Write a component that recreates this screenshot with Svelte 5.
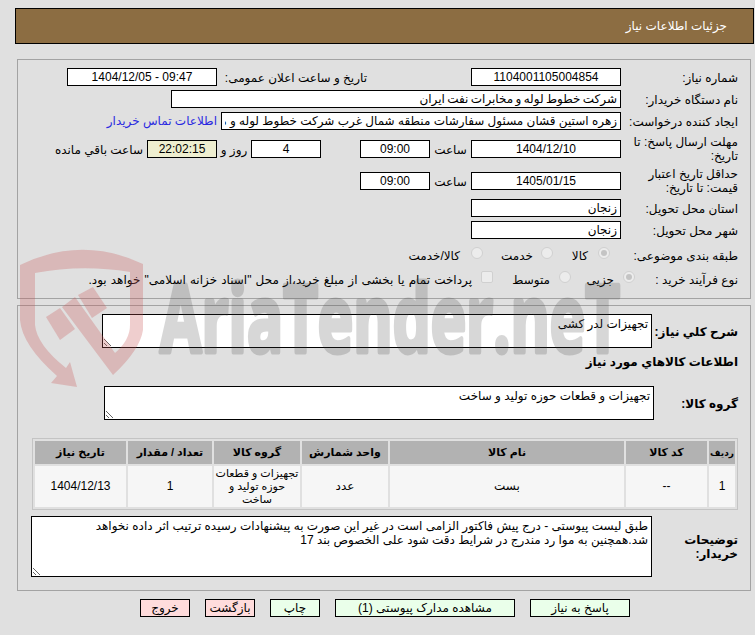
<script>
  const cols = ['ردیف', 'کد کالا', 'نام کالا', 'واحد شمارش', 'گروه کالا', 'تعداد / مقدار', 'تاریخ نیاز'];
  const cells = ['1', '--', 'بست', 'عدد', 'تجهیزات و قطعات\nحوزه تولید و\nساخت', '1', '1404/12/13'];
  const widths = [26, 81, 234, 86, 86, 84, 91];
  const summary = 'تجهیزات لدر کشی';
  const group = 'تجهیزات و قطعات حوزه تولید و ساخت';
  const note = 'طبق لیست پیوستی - درج پیش فاکتور الزامی است در غیر این صورت به پیشنهادات رسیده ترتیب اثر داده نخواهد شد.همچنین به موا رد مندرج در شرایط دقت شود علی الخصوص بند 17';
</script>

<div class="page" dir="rtl">
  <header class="title"><span>جزئیات اطلاعات نیاز</span></header>

  <section class="panel first">
    <div class="row">
      <span class="label">شماره نیاز:</span>
      <input class="w150 center" readonly value="1104001105004854" />
      <span class="label pub">تاریخ و ساعت اعلان عمومی:</span>
      <input class="w150 center" dir="ltr" readonly value="1404/12/05 - 09:47" />
    </div>
    <div class="row">
      <span class="label">نام دستگاه خریدار:</span>
      <input class="w450 tight" readonly value="شرکت خطوط لوله و مخابرات نفت ایران" />
    </div>
    <div class="row">
      <span class="label">ایجاد کننده درخواست:</span>
      <input class="w400" readonly value="زهره استین قشان مسئول سفارشات منطقه شمال غرب شرکت خطوط لوله و مخابرات نفت ایران" />
      <a class="contact" href="#contact">اطلاعات تماس خریدار</a>
    </div>
    <div class="row tall r4">
      <span class="label">مهلت ارسال پاسخ: تا تاریخ:</span>
      <input class="w150 center" readonly value="1404/12/10" />
      <span class="hour">ساعت</span>
      <input class="w70 center" readonly value="09:00" />
      <input class="w70 center days" readonly value="4" />
      <span class="and">روز و</span>
      <input class="w70 center timer" readonly value="22:02:15" />
      <span class="left">ساعت باقي مانده</span>
    </div>
    <div class="row tall r5">
      <span class="label">حداقل تاریخ اعتبار قیمت: تا تاریخ:</span>
      <input class="w150 center" readonly value="1405/01/15" />
      <span class="hour">ساعت</span>
      <input class="w70 center" readonly value="09:00" />
    </div>
    <div class="row r6">
      <span class="label">استان محل تحویل:</span>
      <input class="w150" readonly value="زنجان" />
    </div>
    <div class="row">
      <span class="label">شهر محل تحویل:</span>
      <input class="w150" readonly value="زنجان" />
    </div>
    <div class="row choice r8">
      <span class="label">طبقه بندی موضوعی:</span>
      <span class="radio on kind-start"></span><span class="opt o1">کالا</span>
      <span class="radio"></span><span class="opt o2">خدمت</span>
      <span class="radio"></span><span class="opt o3">کالا/خدمت</span>
    </div>
    <div class="row choice r9">
      <span class="label">نوع فرآیند خرید :</span>
      <span class="radio on proc-start"></span><span class="opt o4">جزیی</span>
      <span class="radio"></span><span class="opt o5">متوسط</span>
      <span class="check"></span><span class="opt o6">پرداخت تمام یا بخشی از مبلغ خرید،از محل "اسناد خزانه اسلامی" خواهد بود.</span>
    </div>
  </section>

  <section class="panel second">
    <div class="row area-row">
      <span class="label bold l86">شرح کلي نیاز:</span>
      <textarea class="a550" readonly value={summary}></textarea>
    </div>
    <h2>اطلاعات کالاهاي مورد نیاز</h2>
    <div class="row area-row">
      <span class="label bold l84">گروه کالا:</span>
      <textarea class="a550" readonly value={group}></textarea>
    </div>
    <table>
      <thead>
        <tr>{#each cols as c, i}<th style="width:{widths[i]}px">{c}</th>{/each}</tr>
      </thead>
      <tbody>
        <tr>{#each cells as c}<td>{c}</td>{/each}</tr>
      </tbody>
    </table>
    <div class="row area-row notes">
      <span class="label bold l86 two">توضیحات خریدار:</span>
      <textarea class="a621" readonly value={note}></textarea>
    </div>
  </section>

  <nav class="actions">
    <button class="go w100">پاسخ به نیاز</button>
    <button class="go w180">مشاهده مدارک پیوستی (1)</button>
    <button class="go w50">چاپ</button>
    <button class="stop w50">بازگشت</button>
    <button class="stop w50">خروج</button>
  </nav>

  <svg class="mark" viewBox="0 0 755 635" aria-hidden="true">
    <g fill="rgba(200,86,86,.29)">
      <path d="M20 265 Q82 235 143 264 L143 330 Q140 350 113 375 L62 307 L75 297 L115 353 Q130 340 130 325 L130 272 Q82 264 35 273 L35 325 Q37 345 66 368 L70 362 L77 387 L51 383 L57 376 Q22 345 20 320 Z" />
      <path d="M78 295 L93 287 L107 308 L92 318 Z" />
      <path d="M46 317 L60 308 L75 329 L60 340 Z" />
    </g>
    <text class="brand" x="160" y="352" textLength="460" lengthAdjust="spacingAndGlyphs" dir="ltr">AriaTender.neT</text>
  </svg>
</div>

<style>
  :global(body) {
    margin: 0;
    background: #e0e0e0;
  }

  .page {
    box-sizing: border-box;
    position: relative;
    width: 755px;
    height: 635px;
    padding-top: 8px;
    overflow: hidden;
    background: #e0e0e0;
    font: 12px "Liberation Sans", "DejaVu Sans", sans-serif;
    color: #000;
  }

  .title {
    box-sizing: border-box;
    display: flex;
    align-items: center;
    height: 36px;
    margin: 0 1px 0 15px;
    padding-right: 26px;
    background: #8c6d42;
    border: 1px solid #000;
    color: #fff;
  }

  .panel {
    box-sizing: border-box;
    width: 734px;
    margin-left: 4px;
    margin-right: 4px;
    border: 1px solid #a3a3a3;
    padding-right: 12px;
  }

  .first {
    height: 240px;
    margin-top: 15px;
    padding-top: 8px;
  }

  .second {
    height: 286px;
    margin-top: 6px;
    padding-top: 8px;
  }

  .row {
    display: flex;
    align-items: center;
    min-height: 18px;
    margin-bottom: 4px;
  }

  .label {
    flex: none;
    box-sizing: border-box;
    width: 117px;
    padding-top: 2px;
    line-height: 14px;
    white-space: normal;
  }

  .tall .label,
  .label.two { padding-top: 0; }

  input {
    box-sizing: border-box;
    flex: none;
    height: 18px;
    padding: 0 3px;
    margin: 0;
    border: 1px solid #000;
    border-radius: 0;
    background: #fff;
    color: #000;
    font: inherit;
    outline: none;
  }

  .center { text-align: center; }
  .tight { word-spacing: -1px; }
  .w150 { width: 150px; }
  .w450 { width: 450px; }
  .w400 { width: 400px; }
  .w70 { width: 70px; }

  .pub {
    width: 145px;
    margin-right: 104px;
    margin-left: 5px;
    white-space: nowrap;
  }

  .contact {
    margin-right: 4px;
    color: #2a2ae0;
    text-decoration: none;
    white-space: nowrap;
  }

  .tall {
    height: 30px;
    margin-bottom: 2px;
  }

  .r4 { margin-top: 3px; }
  .r6 { margin-top: 3px; }

  .hour {
    flex: none;
    width: 41px;
    padding-top: 1px;
    text-align: center;
  }

  .days { margin-right: 39px; }

  .and {
    flex: none;
    width: 34px;
    padding-top: 1px;
    text-align: center;
  }

  .timer { background: #eeeed0; }

  .left {
    flex: none;
    margin-right: 4px;
    padding-top: 1px;
    white-space: nowrap;
  }

  .choice {
    height: 20px;
    margin-bottom: 4px;
  }

  .r8 { margin-top: 6px; }

  .radio {
    flex: none;
    box-sizing: border-box;
    position: relative;
    width: 12px;
    height: 12px;
    border: 1px solid #d0d0d0;
    border-radius: 50%;
    background: #ececec;
    margin-bottom: 4px;
  }

  .radio.on::after {
    content: "";
    position: absolute;
    inset: 2px;
    border-radius: 50%;
    background: #c4c4c4;
  }

  .kind-start { margin-right: 11px; }
  .proc-start { margin-right: -14px; }

  .check {
    flex: none;
    box-sizing: border-box;
    width: 12px;
    height: 12px;
    border: 1px solid #d0d0d0;
    border-radius: 2px;
    background: #ececec;
    margin-bottom: 4px;
  }

  .opt {
    flex: none;
    box-sizing: border-box;
    padding-top: 2px;
    white-space: nowrap;
  }

  .o1 { width: 45px; padding-right: 10px; }
  .o2 { width: 58px; padding-right: 8px; }
  .o3 { padding-right: 11px; }
  .o4 { width: 52px; padding-right: 9px; }
  .o5 { width: 66px; padding-right: 9px; }
  .o6 { padding-right: 9px; word-spacing: 0.8px; }

  .bold { font-weight: 700; }
  .l86 { width: 86px; }
  .l84 { width: 84px; }

  textarea {
    box-sizing: border-box;
    flex: none;
    display: block;
    height: 34px;
    margin: 0;
    padding: 2px 3px;
    border: 1px solid #000;
    border-radius: 0;
    background: #fff;
    color: #000;
    font: inherit;
    outline: none;
    overflow: hidden;
  }

  .a550 { width: 550px; }
  .a621 { width: 621px; height: 61px; padding-left: 30px; }

  h2 {
    margin: 6px 0 16px;
    font-size: 12px;
    line-height: 16px;
    font-weight: 700;
  }

  table {
    box-sizing: border-box;
    width: 706px;
    margin-top: 18px;
    margin-bottom: 6px;
    border: 1px solid #c4c4c4;
    border-collapse: separate;
    border-spacing: 2px;
    table-layout: fixed;
  }

  th {
    height: 23px;
    padding: 0;
    background: #b2b2b2;
    font-weight: 700;
    font-size: 11px;
  }

  th:first-child { font-size: 9px; }

  td {
    height: 41px;
    padding: 0;
    background: #f6f6f6;
    text-align: center;
    line-height: 13px;
    white-space: pre;
  }

  td:nth-child(5) { font-size: 11px; }

  .notes { margin-bottom: 0; }

  .actions {
    display: flex;
    gap: 15px;
    margin: 8px 125px 0 0;
  }

  button {
    box-sizing: border-box;
    flex: none;
    height: 18px;
    padding: 0;
    border: 1px solid #000;
    border-radius: 0;
    color: #000;
    font: inherit;
  }

  .go { background: #eaffea; }
  .stop { background: #ffdcdc; }
  .w100 { width: 100px; }
  .w180 { width: 180px; }
  .w50 { width: 50px; }

  .mark {
    position: absolute;
    top: 0;
    left: 0;
    width: 755px;
    height: 635px;
    pointer-events: none;
  }

  .brand {
    font: 700 94px "Open Sans", sans-serif;
    fill: rgb(60, 60, 60);
    stroke: rgb(60, 60, 60);
    stroke-width: 5px;
    stroke-linejoin: round;
    opacity: 0.2;
    direction: ltr;
  }
</style>
